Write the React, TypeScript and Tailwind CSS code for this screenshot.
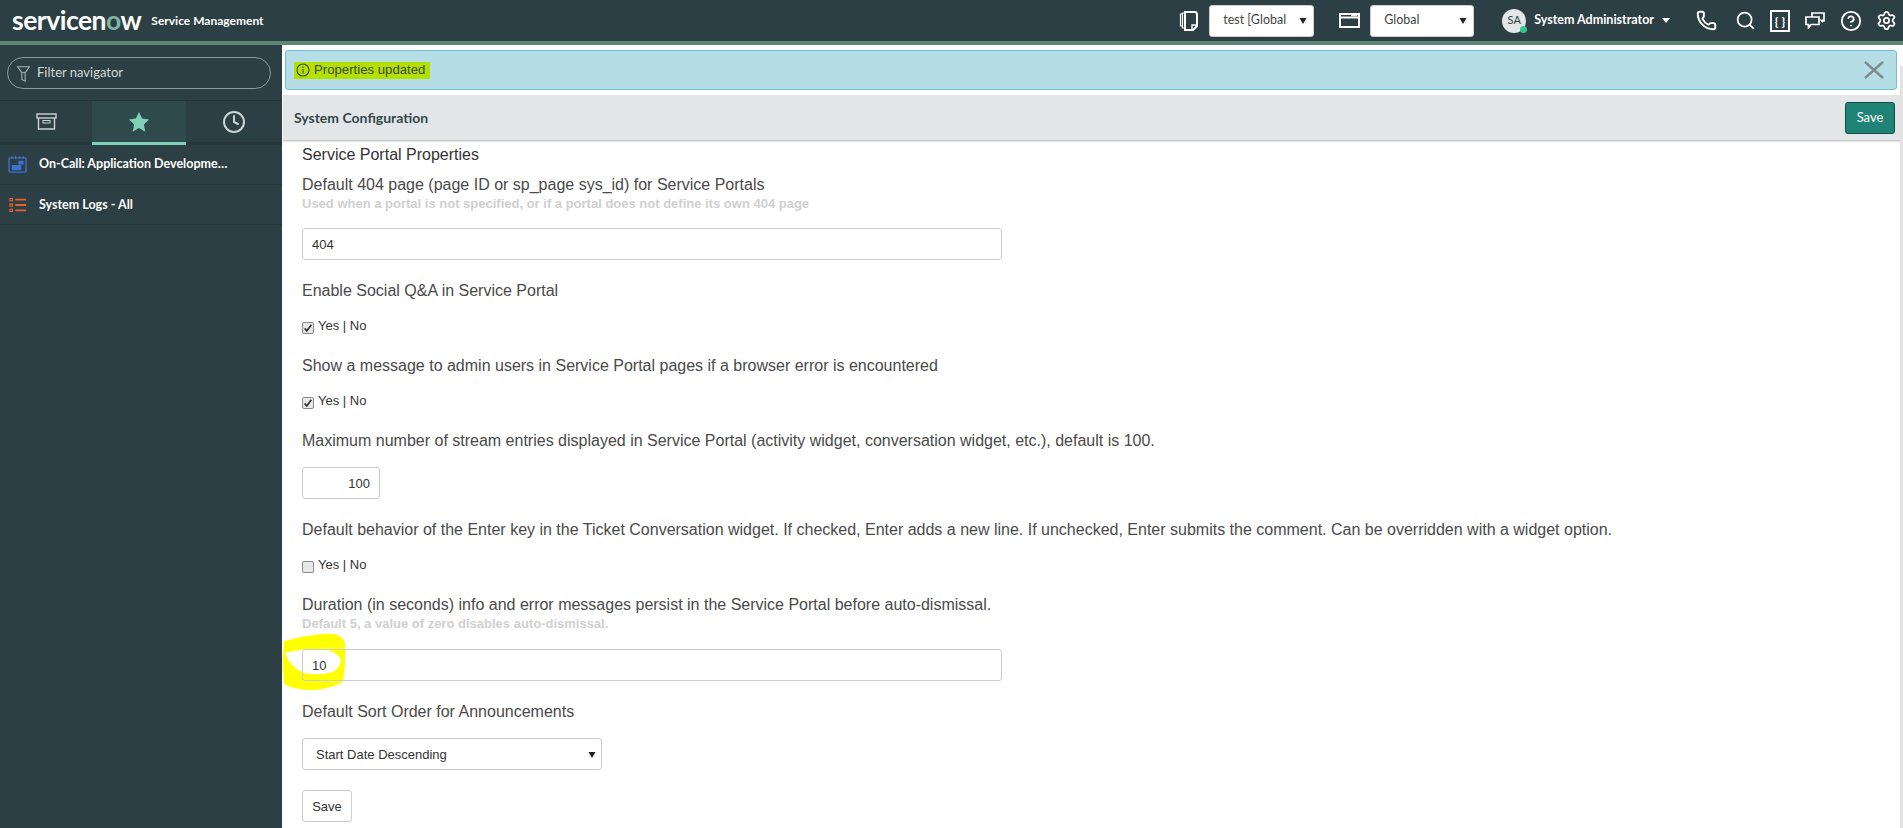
import React from "react";
import { Phone, Search, CircleHelp, Settings, Clock } from "lucide-react";

const Label = ({ children, className = "" }: { children: React.ReactNode; className?: string }) => (
  <div className={"h-[22px] pt-[1px] text-[16px] leading-[22px] text-[#4a4a4a] " + className}>{children}</div>
);
const Hint = ({ children }: { children: React.ReactNode }) => (
  <div className="text-[13px] leading-[18px] font-bold text-[#d0d0d0]">{children}</div>
);
const YesNo = ({ checked, className = "" }: { checked: boolean; className?: string }) => (
  <div className={"flex items-start gap-[4px] h-[18px] " + className}>
    <span className="mt-[6px] w-[12px] h-[12px] rounded-[2px] border border-[#8a8a8a] bg-[#e9e9e9] flex items-center justify-center">
      {checked && (
        <svg viewBox="0 0 12 12" className="w-[10px] h-[10px]">
          <path d="M2 6.5 L4.6 9.5 L10 2" fill="none" stroke="#333" strokeWidth="2" />
        </svg>
      )}
    </span>
    <span className="mt-[2px] text-[13px] leading-[16px] text-[#333]">Yes | No</span>
  </div>
);
const Box = ({ children, className = "" }: { children: React.ReactNode; className?: string }) => (
  <div className={"h-[32px] pt-[1px] border border-[#ccc] rounded-[3px] flex items-center text-[13px] text-[#333] " + className}>
    {children}
  </div>
);
const Caret = ({ className = "" }: { className?: string }) => (
  <svg viewBox="0 0 8 8" className={"w-[8px] h-[8px] " + className}>
    <path d="M0.5 1 H7.5 L4 7 Z" fill="#222" />
  </svg>
);
const Sel = ({ text, w }: { text: string; w: string }) => (
  <div className={"h-[32px] bg-white rounded-[3px] border border-[#ccc] flex items-center justify-between pl-[13px] pr-[6px] text-[12.5px] text-[#444] overflow-hidden " + w}>
    <span className="whitespace-nowrap">{text}</span>
    <Caret />
  </div>
);
const sw = { fill: "none", stroke: "#fff", strokeWidth: 2 };

export default function App() {
  return (
    <div className="w-[1903px] h-[828px] overflow-hidden bg-white flex flex-col font-['Liberation_Sans',sans-serif]">
      <header className="h-[41px] shrink-0 bg-[#2c3f44] flex items-center font-['Lato',sans-serif] text-white">
        <span className="ml-[12px] text-[26.5px] font-bold tracking-[-0.5px] leading-none">
          servicen<span className="text-[#81b5a1]">o</span>w
        </span>
        <span className="ml-[10px] text-[12px] font-bold">Service Management</span>
        <svg viewBox="0 0 19 21" className="ml-auto w-[19px] h-[21px]" {...sw}>
          <path d="M6 2 H16 Q18 2 18 5 V16 L14 20 H6 Z" strokeWidth="2" />
          <path d="M6 3 H3.5 V18 H6 M3.5 4 H1.5 V16 H3.5" strokeWidth="1.2" />
          <path d="M13 19 V15 H17" strokeWidth="1.4" />
        </svg>
        <div className="ml-[11px]"><Sel text="test [Global" w="w-[105px]" /></div>
        <svg viewBox="0 0 21 15" className="ml-[25px] w-[21px] h-[15px]" {...sw}>
          <rect x="1" y="1" width="19" height="13" />
          <path d="M1 4.5 H20" />
          <path d="M12 2.7 H18.5" strokeWidth="1.2" />
        </svg>
        <div className="ml-[10px]"><Sel text="Global" w="w-[104px]" /></div>
        <div className="relative ml-[28px] w-[24px] h-[24px] rounded-full bg-[#e4e6e7] text-[#2c3f44] text-[11px] flex items-center justify-center">
          SA
          <span className="absolute right-[-1px] bottom-[0px] w-[7px] h-[7px] rounded-full bg-[#35c88a]" />
        </div>
        <span className="ml-[8px] text-[12.5px] font-bold">System Administrator</span>
        <svg viewBox="0 0 8 5" className="ml-[8px] w-[8px] h-[5px]"><path d="M0 0 H8 L4 5 Z" fill="#fff" /></svg>
        <Phone className="ml-[26px] w-[21px] h-[21px]" strokeWidth={2.2} />
        <Search className="ml-[19px] w-[19px] h-[19px] scale-110" strokeWidth={2} />
        <svg viewBox="0 0 20 22" className="ml-[15px] w-[20px] h-[22px]" {...sw}>
          <rect x="1" y="1" width="18" height="20" />
          <text x="10" y="15.5" fontSize="12" fontWeight="700" fill="#fff" stroke="none" textAnchor="middle">{"{ }"}</text>
        </svg>
        <svg viewBox="0 0 20 17" className="ml-[15px] w-[20px] h-[17px]" {...sw}>
          <path d="M7 5 V1 H19 V9 H16" strokeWidth="1.7" />
          <path d="M14.5 7.5 L18 11 V7.5 Z" fill="#fff" stroke="none" />
          <path d="M1 5 H14 V12.5 H6 L3.5 16 V12.5 H1 Z" strokeWidth="1.7" />
        </svg>
        <CircleHelp className="ml-[15px] w-[22px] h-[22px] mx-[-1px]" strokeWidth={2} />
        <Settings className="ml-[15px] mr-[6px] w-[21px] h-[21px]" strokeWidth={2} />
      </header>
      <div className="h-[4px] shrink-0 bg-[#5f8575]" />
      <div className="flex-1 flex min-h-0">
        <aside className="w-[282px] shrink-0 bg-[#2c3f44] font-['Lato',sans-serif] flex flex-col">
          <div className="h-[56px] shrink-0 pl-[7px] pt-[12px] border-b border-[#263539]">
            <div className="w-[264px] h-[32px] rounded-full border border-[#8c9a9c] flex items-center pl-[8px] text-[13px] text-[#d3d8d9]">
              <svg viewBox="0 0 16 20" className="w-[15px] h-[17px] mr-[6px]" fill="none" stroke="#a9b3b5" strokeWidth="1.2">
                <path d="M1 2 H15 L10 9 H6 Z M6 9 V17 L10 19 V9" />
              </svg>
              Filter navigator
            </div>
          </div>
          <div className="h-[44px] shrink-0 flex border-b-[3px] border-[#263539]">
            <div className="w-[92px] flex items-center justify-center">
              <svg viewBox="0 0 21 17" className="w-[21px] h-[17px]" fill="none" stroke="#ccd2d3" strokeWidth="1.4">
                <rect x="1" y="1" width="19" height="4" />
                <path d="M2.5 5 V16 H18.5 V5" />
                <rect x="7" y="7.5" width="7" height="2.5" strokeWidth="1" />
              </svg>
            </div>
            <div className="w-[94px] mb-[-3px] flex items-center justify-center bg-[#2f4a4c] border-b-[3px] border-[#7fd0b9]">
              <svg viewBox="0 0 24 24" className="w-[22px] h-[22px]"><path d="M12 1 L15.4 8.3 L23 9.2 L17.3 14.6 L18.9 22.5 L12 18.5 L5.1 22.5 L6.7 14.6 L1 9.2 L8.6 8.3 Z" fill="#7fd0b9" /></svg>
            </div>
            <div className="flex-1 flex items-center justify-center">
              <Clock className="w-[24px] h-[24px] text-[#ccd2d3]" strokeWidth={2} />
            </div>
          </div>
          <div className="h-[40px] shrink-0 flex items-center border-b border-[#263539] text-[12.5px] font-bold text-white">
            <svg viewBox="0 0 20 18" className="ml-[8px] w-[19px] h-[17px]">
              <rect x="1" y="2" width="18" height="15" rx="1" fill="none" stroke="#3f71d1" strokeWidth="1.4" />
              <path d="M4 0 V3 M8 0 V3 M12 0 V3 M16 0 V3" stroke="#3f71d1" />
              <path d="M11 5 H16.5 V9 H11 Z M4 9.5 H14 V15 H4 Z" fill="#3f71d1" />
            </svg>
            <span className="ml-[12px]">On-Call: Application Developme…</span>
          </div>
          <div className="h-[40px] shrink-0 flex items-center border-b border-[#263539] text-[12.5px] font-bold text-white">
            <svg viewBox="0 0 20 16" className="ml-[9px] w-[18px] h-[16px]" fill="none" stroke="#e8602c" strokeWidth="1.2">
              <path d="M7 2 H19 M7 8 H19 M7 14 H19" strokeWidth="2" />
              <rect x="1" y="0.8" width="3" height="2.5" />
              <rect x="1" y="6.8" width="3" height="2.5" />
              <rect x="1" y="12.7" width="3" height="2.5" />
            </svg>
            <span className="ml-[12px] pt-[1px]">System Logs - All</span>
          </div>
        </aside>
        <main className="flex-1 min-w-0 flex">
          <div className="flex-1 min-w-0 pl-[1px] pt-[5px] flex flex-col">
            <div className="h-[40px] ml-[2px] mr-[3px] shrink-0 flex items-center bg-[#b5dde5] border border-[#6fc0d3] rounded-[3px] text-[#3c4a3c]">
              <span className="flex items-center h-[17px] w-[136px] ml-[8px] pl-[2px] bg-[#b4e000] gap-[4px]">
                <svg viewBox="0 0 14 14" className="w-[14px] h-[14px]" fill="none" stroke="#3c4a3c" strokeWidth="1.1">
                  <circle cx="7" cy="7" r="6" />
                  <path d="M7 6 V10.5 M7 3.5 V5" />
                </svg>
                <span className="text-[13.2px] whitespace-nowrap">Properties updated</span>
              </span>
              <svg viewBox="0 0 20 18" className="ml-auto mr-[12px] w-[20px] h-[18px]" fill="none" stroke="#7f8c8d" strokeWidth="2.4">
                <path d="M1 1 L19 17 M19 1 L1 17" />
              </svg>
            </div>
            <div className="mt-[5px] h-[46px] shrink-0 flex items-center justify-between bg-[#e3e6e8] border-b border-[#ccc] pl-[11px] pr-[5px] shadow-[0_1px_1px_rgba(0,0,0,0.1)]">
              <span className="text-[14px] font-bold text-[#37474a] font-['Lato',sans-serif]">System Configuration</span>
              <span className="w-[50px] h-[32px] rounded-[3px] bg-[#1f8476] border border-[#134f47] text-white text-[13px] flex items-center justify-center font-['Lato',sans-serif]">Save</span>
            </div>
            <div className="pl-[19px] flex-1 min-h-0 overflow-hidden">
              <div className="text-[16px] leading-[22px] text-[#333] mt-[3px]">Service Portal Properties</div>
              <Label className="mt-[7px]">Default 404 page (page ID or sp_page sys_id) for Service Portals</Label>
              <Hint>Used when a portal is not specified, or if a portal does not define its own 404 page</Hint>
              <Box className="mt-[15px] w-[700px] pl-[9px]">404</Box>
              <Label className="mt-[19px]">Enable Social Q&amp;A in Service Portal</Label>
              <YesNo checked className="mt-[15px]" />
              <Label className="mt-[20px]">Show a message to admin users in Service Portal pages if a browser error is encountered</Label>
              <YesNo checked className="mt-[15px]" />
              <Label className="mt-[20px]">Maximum number of stream entries displayed in Service Portal (activity widget, conversation widget, etc.), default is 100.</Label>
              <Box className="mt-[16px] w-[78px] justify-end pr-[9px]">100</Box>
              <Label className="mt-[19px]">Default behavior of the Enter key in the Ticket Conversation widget. If checked, Enter adds a new line. If unchecked, Enter submits the comment. Can be overridden with a widget option.</Label>
              <YesNo checked={false} className="mt-[15px]" />
              <Label className="mt-[20px]">Duration (in seconds) info and error messages persist in the Service Portal before auto-dismissal.</Label>
              <Hint>Default 5, a value of zero disables auto-dismissal.</Hint>
              <div className="relative mt-[16px] w-[700px]">
                <svg viewBox="0 0 64 58" className="absolute left-[-20px] top-[-16px] w-[64px] h-[58px]">
                  <path fillRule="evenodd" d="M2 8 Q20 3 40 1 Q60 -1 63 10 Q64 40 60 50 Q40 58 25 57 Q5 55 2 50 Q0 30 2 8 Z M3 20 Q25 14 46 17 Q56 20 59 27 Q58 34 51 39 Q36 43 22 40 Q8 34 3 20 Z" fill="#ffff00" />
                </svg>
                <Box className="relative pl-[9px]">10</Box>
              </div>
              <Label className="mt-[19px]">Default Sort Order for Announcements</Label>
              <Box className="mt-[16px] w-[300px] pl-[13px] pr-[5px] justify-between"><span>Start Date Descending</span><Caret /></Box>
              <Box className="mt-[20px] w-[50px] justify-center">Save</Box>
            </div>
          </div>
          <div className="w-[3px] shrink-0 mt-[21px] bg-[#e3e3e3]" />
        </main>
      </div>
    </div>
  );
}
